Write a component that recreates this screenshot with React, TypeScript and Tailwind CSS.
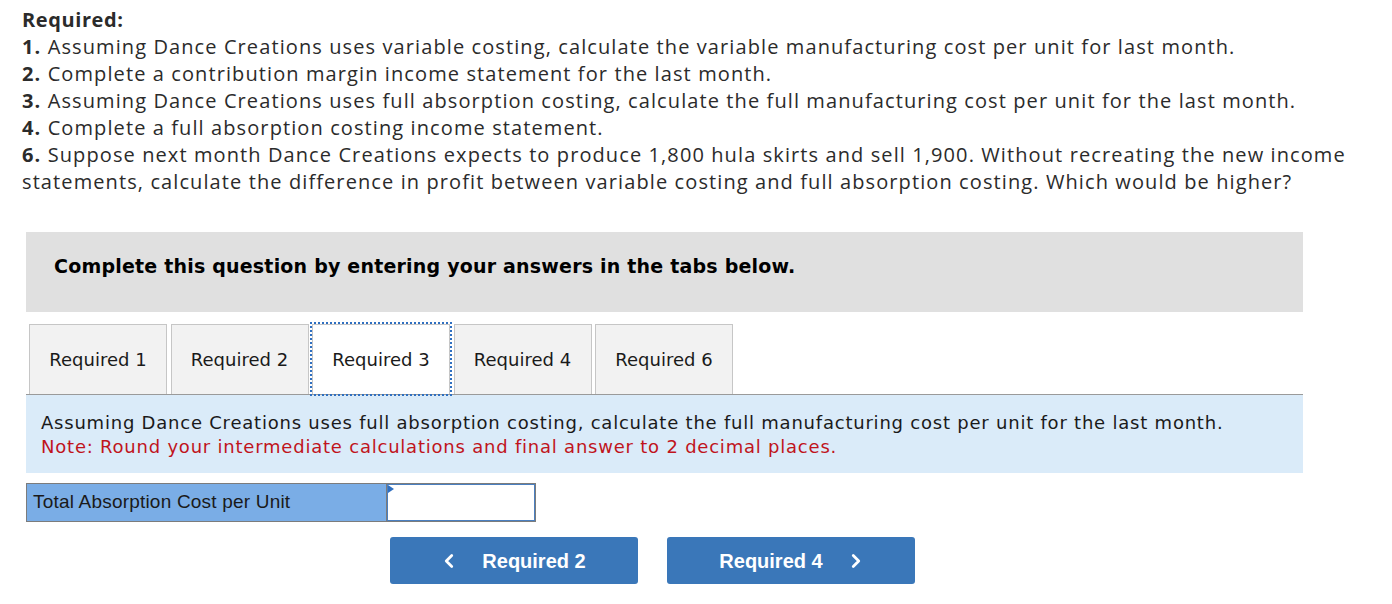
import { ChevronLeft, ChevronRight } from "lucide-react";

const tabs = ["Required 1", "Required 2", "Required 3", "Required 4", "Required 6"];
const ACTIVE = 2;

const questions = [
  ["1.", "Assuming Dance Creations uses variable costing, calculate the variable manufacturing cost per unit for last month."],
  ["2.", "Complete a contribution margin income statement for the last month."],
  ["3.", "Assuming Dance Creations uses full absorption costing, calculate the full manufacturing cost per unit for the last month."],
  ["4.", "Complete a full absorption costing income statement."],
  ["6.", "Suppose next month Dance Creations expects to produce 1,800 hula skirts and sell 1,900. Without recreating the new income statements, calculate the difference in profit between variable costing and full absorption costing. Which would be higher?"],
];

export default function App() {
  return (
    <div className="w-[1392px] h-[604px] bg-white overflow-hidden">
      {/* Required list */}
      <div className="pl-[22px] pr-[20px] pt-[6px] text-[20px] leading-[27px] tracking-[1.1px] text-[#2b2b2b] font-['Open_Sans',sans-serif]">
        <div className="font-bold tracking-[0.6px]">Required:</div>
        {questions.map(([n, t]) => (
          <div key={n}>
            <span className="inline-block font-bold leading-[27px]">{n}</span> {t}
          </div>
        ))}
      </div>

      <div className="mx-[26px] w-[1277px] mt-[37px]">
        {/* instructions */}
        <div className="h-[80px] bg-[#e0e0e0] flex items-center pl-[28px] pb-[12px] font-['DejaVu_Sans',sans-serif] font-bold text-[19px] tracking-[0.2px] text-black">
          Complete this question by entering your answers in the tabs below.
        </div>

        {/* tabs */}
        <div className="mt-[12px] flex gap-[3.5px] pl-[3px] border-b border-[#9a9a9a] font-['DejaVu_Sans',sans-serif] text-[18px] text-[#1a1a1a]">
          {tabs.map((t, i) => (
            <div
              key={t}
              className={
                i === ACTIVE
                  ? "w-[138px] h-[70px] flex items-center justify-center bg-white border border-b-0 border-[#c6c6c6] outline-dotted outline-[2.5px] outline-offset-0 outline-[#2f6fc0] -mb-px"
                  : "w-[138px] h-[70px] flex items-center justify-center bg-[#f2f2f2] border border-b-0 border-[#c6c6c6]"
              }
            >
              {t}
            </div>
          ))}
        </div>

        {/* prompt */}
        <div className="h-[78px] bg-[#daebf9] pl-[15px] pt-[16px] font-['DejaVu_Sans',sans-serif] text-[18px] leading-[24px] tracking-[0.78px]">
          <div className="text-[#1a1a1a]">
            Assuming Dance Creations uses full absorption costing, calculate the full manufacturing cost per unit for the last month.
          </div>
          <div className="text-[#c0141c]">
            Note: Round your intermediate calculations and final answer to 2 decimal places.
          </div>
        </div>

        {/* answer row */}
        <div className="mt-[10px] flex h-[39px]">
          <div className="w-[360px] bg-[#7aade6] border border-[#7c7c7c] border-r-0 flex items-center pl-[6px] font-['Liberation_Sans',sans-serif] text-[19px] tracking-[0.2px] text-[#1a1a1a]">
            Total Absorption Cost per Unit
          </div>
          <div className="relative w-[150px] border border-[#7c7c7c] bg-white">
            <div className="h-full border border-[#4a7fc0]" />
            <div className="absolute left-[1px] top-[1px] w-0 h-0 border-y-[4px] border-y-transparent border-l-[6px] border-l-[#2f6fc0]" />
          </div>
        </div>

        {/* nav */}
        <div className="mt-[15px] flex gap-[29px] pl-[364px] font-['Liberation_Sans',sans-serif] font-bold text-[20px] text-white">
          <button className="w-[248px] h-[47px] rounded-[3px] bg-[#3a77b9] flex items-center justify-center gap-[22px] pr-[4px]">
            <ChevronLeft size={22} strokeWidth={3} />
            <span>Required 2</span>
          </button>
          <button className="w-[248px] h-[47px] rounded-[3px] bg-[#3a77b9] flex items-center justify-center gap-[22px] pl-[4px]">
            <span>Required 4</span>
            <ChevronRight size={22} strokeWidth={3} />
          </button>
        </div>
      </div>
    </div>
  );
}
